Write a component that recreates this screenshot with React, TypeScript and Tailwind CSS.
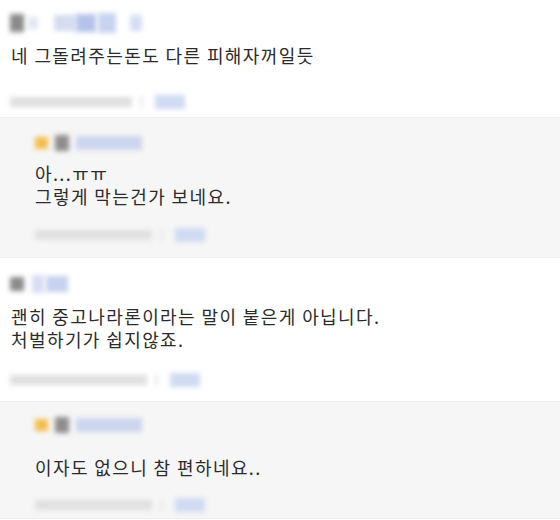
const font = { fontFamily: '"Malgun Gothic", "Noto Sans CJK KR", "Noto Sans", sans-serif' }

function Blob({ className }: { className: string }) {
  return <div className={"blur-[2.5px] " + className} />
}

function NameTop({ reply, short }: { reply?: boolean; short?: boolean }) {
  if (reply) {
    return (
      <div className="flex items-center h-[22px]">
        <Blob className="w-[13px] h-[12px] bg-[#f4bd4c]" />
        <Blob className="ml-[7px] w-[14px] h-[16px] bg-[#8d8d8d]" />
        <Blob className="ml-[7px] w-[66px] h-[14px] bg-[#ccd5ee]" />
      </div>
    )
  }
  if (short) {
    return (
      <div className="flex items-center h-[22px]">
        <Blob className="w-[14px] h-[14px] bg-[#8a8a8a]" />
        <Blob className="ml-[8px] w-[12px] h-[18px] bg-[#d6def2]" />
        <Blob className="ml-[2px] w-[22px] h-[16px] bg-[#c6d2ee]" />
      </div>
    )
  }
  return (
    <div className="flex items-center h-[22px]">
      <Blob className="w-[14px] h-[18px] bg-[#8a8a8a]" />
      <Blob className="ml-[4px] w-[10px] h-[12px] bg-[#e2e6f2]" />
      <Blob className="ml-[16px] w-[22px] h-[16px] bg-[#d4dcf1]" />
      <Blob className="w-[20px] h-[18px] bg-[#b4c3ea]" />
      <Blob className="ml-[2px] w-[18px] h-[20px] bg-[#c8d3f0]" />
      <Blob className="ml-[14px] w-[12px] h-[16px] bg-[#d6def2]" />
    </div>
  )
}

function DateRow({ gray }: { gray: string }) {
  return (
    <div className="flex items-center h-[14px]">
      <Blob className={"h-[10px] bg-[#e0e0e0] " + gray} />
      <Blob className="ml-[8px] w-[3px] h-[12px] bg-[#e8e8e8]" />
      <Blob className="ml-[12px] w-[30px] h-[14px] bg-[#d0daf2]" />
    </div>
  )
}

export default function App() {
  return (
    <div
      className="w-[560px] h-[520px] bg-white text-[#2b2b2b] text-[18px] leading-[23px] tracking-[1.4px] overflow-hidden"
      style={font}
    >
      {/* comment 1 */}
      <div className="h-[117px] pl-[10px] pt-[12px]">
        <NameTop />
        <p className="mt-[10px] pl-[1px]">네 그돌려주는돈도 다른 피해자꺼일듯</p>
        <div className="mt-[28px]">
          <DateRow gray="w-[122px]" />
        </div>
      </div>

      {/* reply 1 */}
      <div className="h-[141px] bg-[#f6f6f6] border-t border-b border-[#efefef] pl-[35px] pt-[14px]">
        <NameTop reply />
        <p className="mt-[8px]">
          아...ㅠㅠ
          <br />
          그렇게 막는건가 보네요.
        </p>
        <div className="mt-[20px]">
          <DateRow gray="w-[117px]" />
        </div>
      </div>

      {/* comment 2 */}
      <div className="h-[143px] pl-[10px] pt-[15px]">
        <NameTop short />
        <p className="mt-[10px] pl-[1px]">
          괜히 중고나라론이라는 말이 붙은게 아닙니다.
          <br />
          처벌하기가 쉽지않죠.
        </p>
        <div className="mt-[22px]">
          <DateRow gray="w-[137px]" />
        </div>
      </div>

      {/* reply 2 */}
      <div className="h-[118px] bg-[#f6f6f6] border-t border-b border-[#efefef] pl-[35px] pt-[12px]">
        <NameTop reply />
        <p className="mt-[20px]">이자도 없으니 참 편하네요..</p>
        <div className="mt-[19px]">
          <DateRow gray="w-[117px]" />
        </div>
      </div>
    </div>
  )
}
